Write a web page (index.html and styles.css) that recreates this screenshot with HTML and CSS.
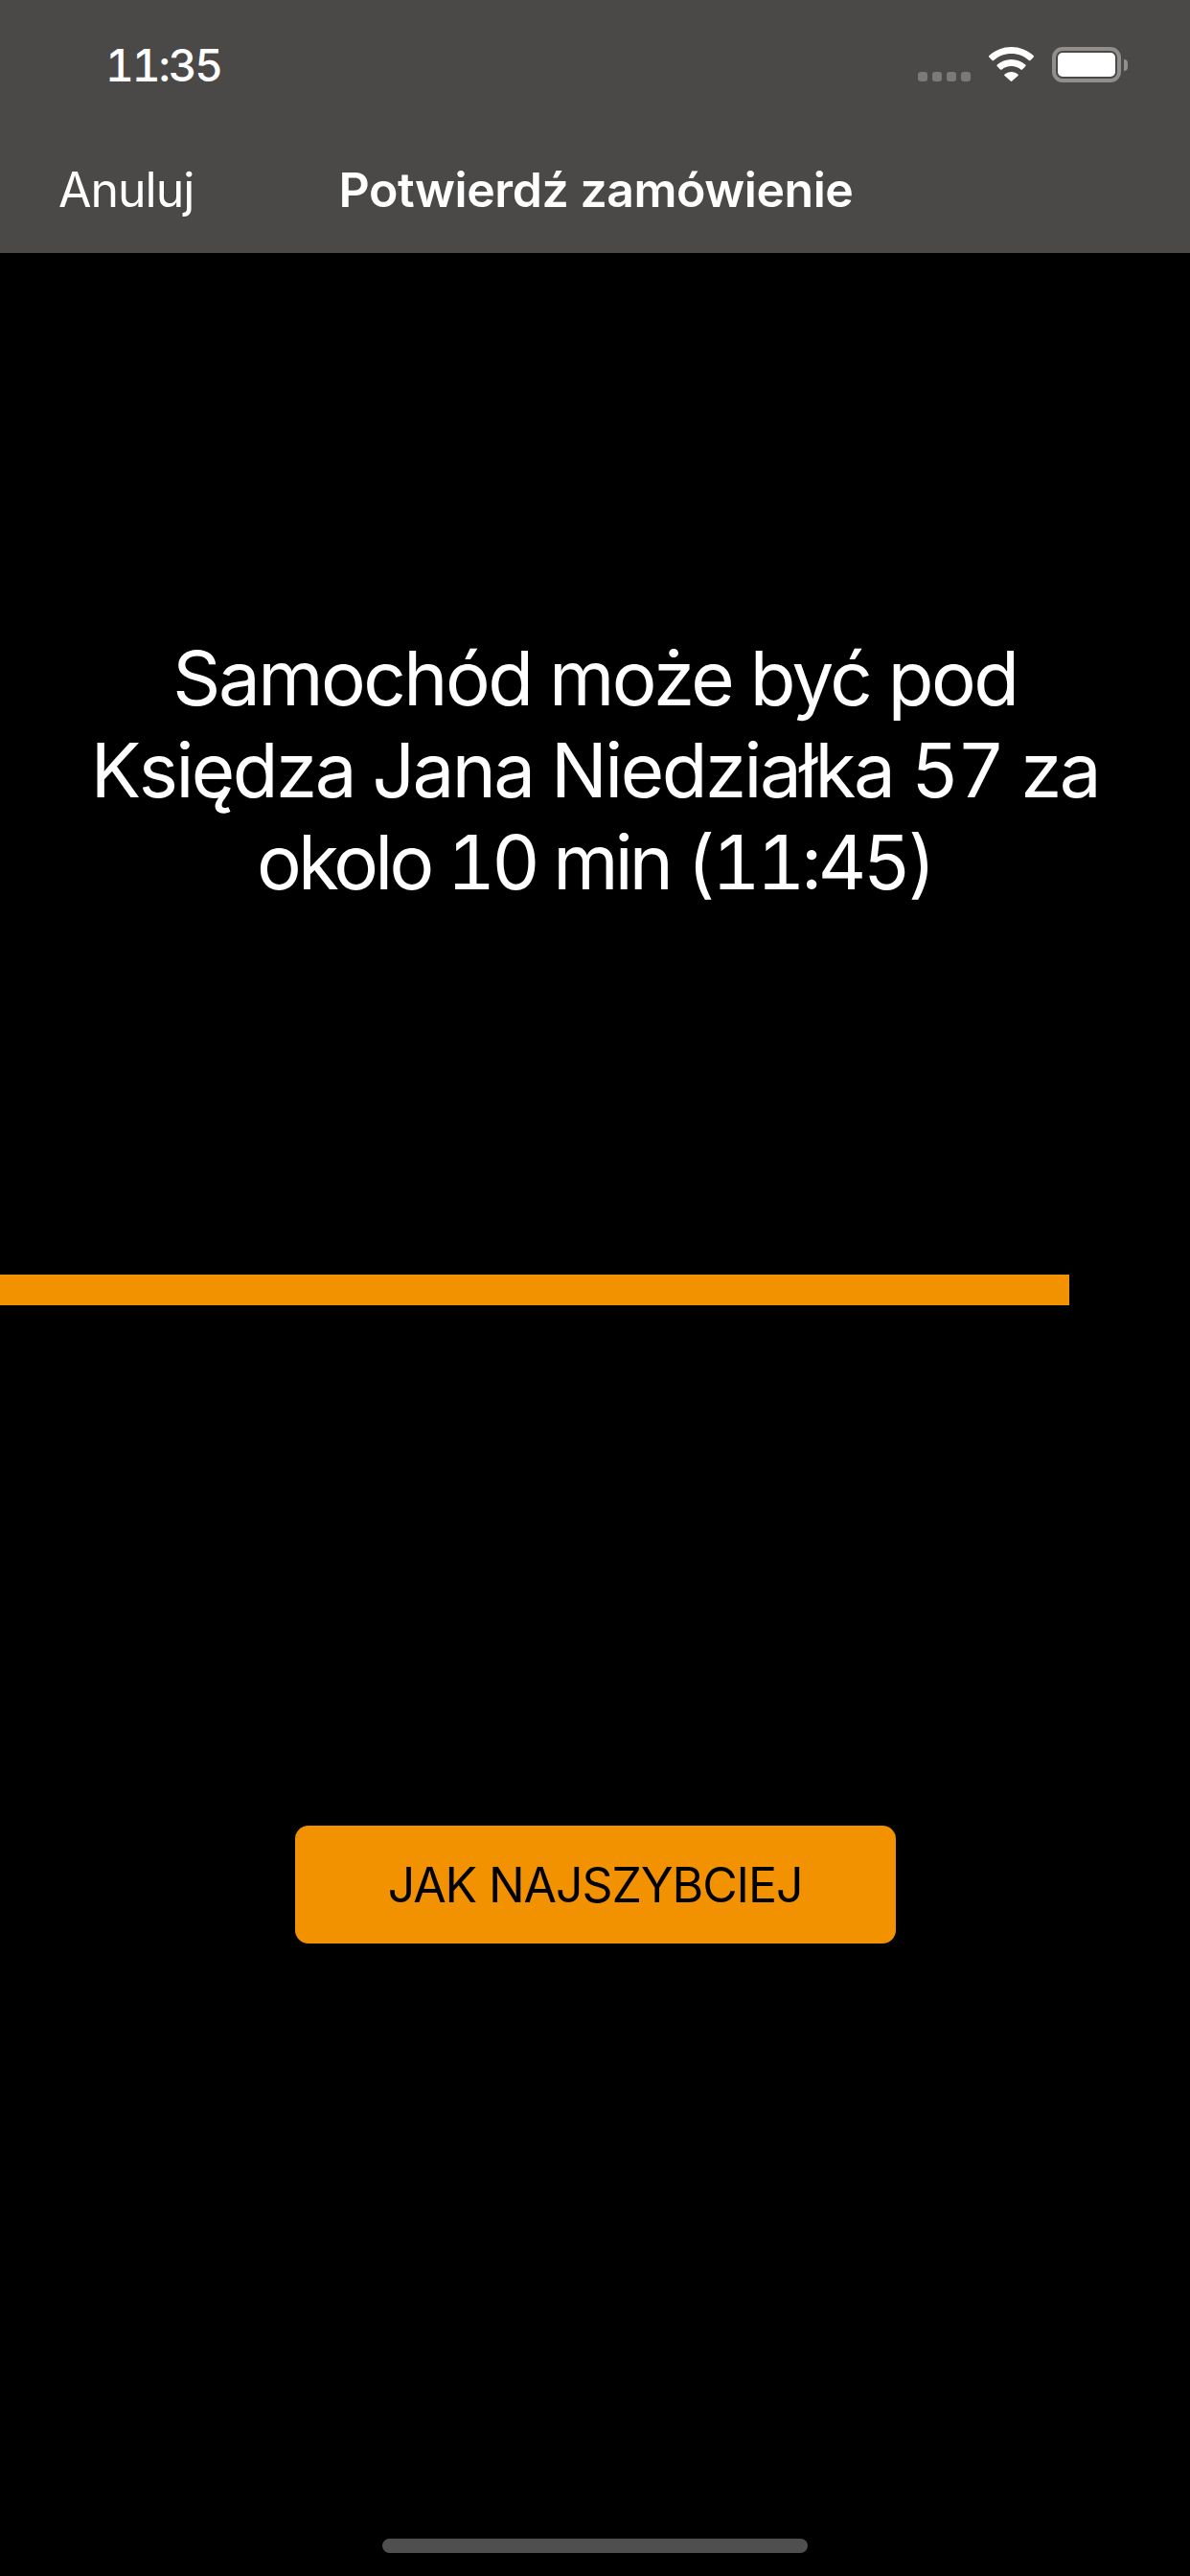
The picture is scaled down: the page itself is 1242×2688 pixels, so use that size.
FILE: index.html
```html
<!DOCTYPE html>
<html lang="pl">
<head>
    <meta charset="UTF-8">
    <meta name="viewport" content="width=device-width, initial-scale=1.0">
    <title>Potwierdź zamówienie</title>
    <link rel="stylesheet" href="styles.css">
</head>
<body>

    <header class="top-bar">
        <div class="status-bar">
            <span class="clock">11:35</span>
            <div class="status-icons">
                <div class="signal">
                    <span class="dot"></span><span class="dot"></span><span class="dot"></span><span class="dot"></span>
                </div>
                <svg class="wifi" width="47" height="36" viewBox="0 0 47 36">
                    <path fill="#fff" d="M23.5 0C14.6 0 6.6 3.4.4 9.1c-.5.4-.5 1.1 0 1.6l3.2 3.3c.4.4 1.1.4 1.6 0C10 9.600 16.500 7 23.500 7s13.500 2.600 18.300 7c.5.400 1.200.400 1.600 0l3.200-3.300c.5-.5.5-1.200 0-1.600C40.400 3.400 32.400 0 23.500 0z"/>
                    <path fill="#fff" d="M23.500 13c-5.700 0-10.800 2.100-14.700 5.600-.5.400-.5 1.100 0 1.600l3.200 3.300c.4.400 1.100.400 1.600.100 2.600-2.200 6-3.600 9.900-3.600s7.300 1.400 9.900 3.600c.5.300 1.200.300 1.600-.1l3.200-3.300c.5-.5.5-1.200 0-1.600C34.300 15.100 29.200 13 23.500 13z"/>
                    <path fill="#fff" d="M23.500 26c-2.700 0-5.100 1-6.900 2.500-.5.400-.5 1.100-.1 1.500l6.200 5.600c.4.400 1.200.400 1.600 0l6.200-5.600c.4-.4.400-1.100-.1-1.500-1.800-1.500-4.200-2.500-6.900-2.500z"/>
                </svg>
                <div class="battery">
                    <div class="battery-body"><div class="battery-level"></div></div>
                    <div class="battery-nub"></div>
                </div>
            </div>
        </div>
        <nav class="nav-bar">
            <a class="nav-cancel">Anuluj</a>
            <h1 class="nav-title">Potwierdź zamówienie</h1>
        </nav>
    </header>

    <main class="content">
        <p class="message">Samochód może być pod<br>Księdza Jana Niedziałka 57 za<br><span class="message-time">okolo 10 min (11:45)</span></p>

        <div class="progress">
            <div class="progress-fill" style="width: 89.86%"></div>
        </div>

        <button class="asap-button">JAK NAJSZYBCIEJ</button>
    </main>

    <div class="home-indicator"></div>

</body>
</html>
```

FILE: styles.css
```css
* {
    box-sizing: border-box;
}
html, body {
    margin: 0;
    padding: 0;
}
body {
    width: 1242px;
    height: 2688px;
    overflow: hidden;
    display: flex;
    flex-direction: column;
    background-color: #000000;
    color: #ffffff;
    font-family: 'Inter', 'Liberation Sans', sans-serif;
}

/* top of the screen */
.top-bar {
    height: 264px;
    flex-shrink: 0;
    background-color: #4a4947;
}
.status-bar {
    height: 132px;
    padding: 50px 65px 0 110px;
    display: flex;
    justify-content: space-between;
    align-items: flex-start;
}
.clock {
    font-size: 46px;
    font-weight: 500;
    line-height: 36px;
    font-variant-numeric: tabular-nums;
    letter-spacing: -2.1px;
}
.status-icons {
    display: flex;
    align-items: flex-start;
    margin-top: -1px;
}
.signal {
    display: flex;
    gap: 5px;
    margin-top: 26px;
    margin-right: 19px;
}
.dot {
    width: 10px;
    height: 10px;
    border-radius: 3px;
    background-color: #7b7a79;
}
.wifi {
    display: block;
    margin-right: 19px;
}
.battery {
    display: flex;
    align-items: center;
    height: 37px;
}
.battery-body {
    width: 72px;
    height: 37px;
    padding: 2px;
    border: 4px solid #918f8e;
    border-radius: 11px;
}
.battery-level {
    width: 100%;
    height: 100%;
    background-color: #ffffff;
    border-radius: 5px;
}
.battery-nub {
    width: 4px;
    height: 12px;
    margin-left: 3px;
    background-color: #918f8e;
    border-radius: 0 6px 6px 0;
}

.nav-bar {
    height: 132px;
    display: flex;
    justify-content: center;
    position: relative;
    padding-top: 36px;
}
.nav-cancel {
    position: absolute;
    left: 61px;
    top: 36px;
    font-size: 50px;
    line-height: 60px;
    letter-spacing: -1px;
}
.nav-title {
    margin: 0 0 0 2px;
    font-size: 50px;
    font-weight: 600;
    line-height: 60px;
    letter-spacing: -0.45px;
}

/* main area */
.content {
    flex: 1;
    display: flex;
    flex-direction: column;
    align-items: center;
    padding-top: 396px;
}
.message {
    margin: 0;
    font-size: 78px;
    line-height: 96px;
    letter-spacing: -2.5px;
    text-align: center;
    font-variant-numeric: tabular-nums;
}
.message-time {
    letter-spacing: -3.8px;
}
.progress {
    width: 100%;
    height: 32px;
    margin-top: 382px;
}
.progress-fill {
    height: 100%;
    background-color: #f39200;
}
.asap-button {
    width: 627px;
    height: 123px;
    margin-top: 543px;
    border: none;
    border-radius: 14px;
    background-color: #f39200;
    color: #000000;
    font-family: inherit;
    font-size: 50px;
    letter-spacing: -1.1px;
}

.home-indicator {
    position: absolute;
    left: 399px;
    top: 2649px;
    width: 444px;
    height: 15px;
    border-radius: 8px;
    background-color: #4f4f4f;
}
```
